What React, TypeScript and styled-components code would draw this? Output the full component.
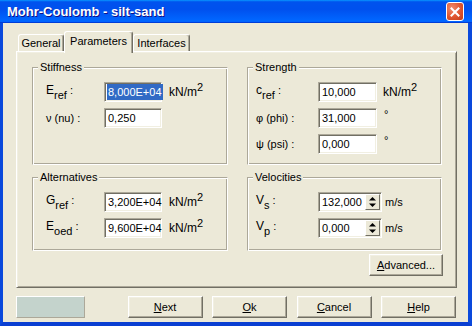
import React from 'react';
import styled, { createGlobalStyle } from 'styled-components';

const face = '#ECE9D8';
const light = '#F1EFE2';
const shadow = '#ACA899';
const darkShadow = '#716F64';

const GlobalStyle = createGlobalStyle`
  html, body {
    margin: 0;
    padding: 0;
    background: ${face};
  }
  body {
    font-family: 'Liberation Sans', Arial, sans-serif;
    font-size: 11px;
    color: #000;
  }
`;

type Side = 'left' | 'right';

const sides = {
  left: { pad: 13, label: 58, field: 58, unitGap: 7 },
  right: { pad: 8, label: 62, field: 59, unitGap: 6 },
};

const Window = styled.div`
  width: 472px;
  height: 326px;
  display: flex;
  flex-direction: column;
  background: #0a49dc;
  overflow: hidden;
`;

const TitleBar = styled.div`
  height: 23px;
  flex: none;
  display: flex;
  align-items: center;
  justify-content: space-between;
  padding: 0 8px 0 7px;
  background: linear-gradient(
    180deg,
    #0997ff,
    #0053ee 8%,
    #0050ee 40%,
    #0066ff 88%,
    #0066ff 93%,
    #005bff 95%,
    #003dd7 96%,
    #003dd7
  );
`;

const Title = styled.span`
  font-family: 'Liberation Sans', Arial, sans-serif;
  font-weight: bold;
  font-size: 13px;
  color: #fff;
  text-shadow: 1px 1px #0f1089;
  letter-spacing: 0;
`;

const CloseButton = styled.div`
  width: 18px;
  height: 19px;
  box-sizing: border-box;
  border: 1px solid #fff;
  border-radius: 3px;
  background: radial-gradient(circle at 30% 30%, #f08a6c, #e0552f 55%, #c23b17);
  display: flex;
  align-items: center;
  justify-content: center;
`;

const Frame = styled.div`
  flex: 1;
  display: flex;
  border-left: 3px solid #0a49dc;
  border-right: 4px solid #0a49dc;
  border-bottom: 4px solid #0a3fd2;
`;

const Client = styled.div`
  flex: 1;
  display: flex;
  flex-direction: column;
  background: ${face};
  padding: 8px 11px 4px 13px;
`;

const TabStrip = styled.div`
  height: 20px;
  display: flex;
  align-items: flex-end;
  padding-left: 2px;
  position: relative;
  z-index: 1;
`;

const Tab = styled.div<{ $active?: boolean; $w: number }>`
  box-sizing: border-box;
  width: ${(p) => p.$w}px;
  height: ${(p) => (p.$active ? 22 : 17)}px;
  margin-bottom: ${(p) => (p.$active ? -2 : 0)}px;
  padding-bottom: ${(p) => (p.$active ? 3 : 0)}px;
  display: flex;
  align-items: center;
  justify-content: center;
  background: ${face};
  border: 1px solid #fff;
  border-bottom: none;
  border-right-color: ${darkShadow};
  border-radius: 3px 3px 0 0;
  box-shadow: inset -1px 0 ${shadow};
  font-size: 11px;
  position: relative;
  z-index: ${(p) => (p.$active ? 2 : 1)};
`;

const TabPanel = styled.div`
  box-sizing: border-box;
  height: 237px;
  flex: none;
  border: 1px solid;
  border-color: #fff ${darkShadow} ${darkShadow} #fff;
  box-shadow: inset 1px 1px ${light}, inset -1px -1px ${shadow};
  padding: 9px 14px 0 15px;
  display: flex;
  flex-direction: column;
`;

const GroupGrid = styled.div`
  display: grid;
  grid-template-columns: 196px 195px;
  grid-template-rows: 104px 80px;
  column-gap: 19px;
  row-gap: 6px;
`;

const Group = styled.fieldset`
  margin: 0;
  padding: 0;
  min-width: 0;
  box-sizing: border-box;
  border: 1px solid;
  border-color: ${shadow} #fff #fff ${shadow};
  box-shadow: inset 1px 1px #fff, inset -1px -1px ${shadow};
`;

const Legend = styled.legend`
  margin-left: 5px;
  padding: 0 2px;
  font-size: 11px;
  line-height: 13px;
  background: ${face};
`;

const Rows = styled.div<{ $side: Side }>`
  display: flex;
  flex-direction: column;
  gap: 6px;
  margin-top: 8px;
  padding-left: ${(p) => sides[p.$side].pad}px;
`;

const Row = styled.div<{ $side: Side }>`
  display: grid;
  grid-template-columns: ${(p) => sides[p.$side].label}px auto auto;
  justify-content: start;
  align-items: center;
  height: 20px;
`;

const Label = styled.div<{ $sub?: boolean }>`
  font-size: 11px;
  line-height: 14px;
  white-space: nowrap;
  padding-bottom: ${(p) => (p.$sub ? 5 : 0)}px;
`;

const Sym = styled.span`
  font-size: 12px;
`;

const Sub = styled.sub`
  font-size: 11px;
  line-height: 0;
  vertical-align: -5px;
`;

const Sup = styled.sup`
  font-size: 11px;
  line-height: 0;
  vertical-align: 5px;
`;

const Field = styled.div<{ $w: number }>`
  box-sizing: border-box;
  width: ${(p) => p.$w}px;
  height: 20px;
  display: flex;
  align-items: stretch;
  background: #fff;
  border: 1px solid;
  border-color: ${shadow} #fff #fff ${shadow};
  box-shadow: inset 1px 1px ${darkShadow}, inset -1px -1px ${light};
  padding: 1px 1px 1px 2px;
  font-size: 11px;
`;

const FieldText = styled.span<{ $selected?: boolean }>`
  display: flex;
  align-items: center;
  padding: 0 1px;
  background: ${(p) => (p.$selected ? '#316AC5' : 'transparent')};
  color: ${(p) => (p.$selected ? '#fff' : '#000')};
`;

const Spin = styled.div`
  margin-left: auto;
  width: 15px;
  box-sizing: border-box;
  background: ${face};
  border: 1px solid;
  border-color: #fff ${darkShadow} ${darkShadow} #fff;
  display: flex;
  align-items: center;
  justify-content: center;
`;

const Unit = styled.div<{ $gap: number }>`
  margin-left: ${(p) => p.$gap}px;
  font-size: 12px;
  white-space: nowrap;
`;

const Degree = styled.div<{ $gap: number }>`
  margin-left: ${(p) => p.$gap + 1}px;
  align-self: start;
  font-size: 11px;
  line-height: 12px;
`;

const AdvancedRow = styled.div`
  display: flex;
  justify-content: flex-end;
  margin: 3px -1px 0 0;
`;

const Button = styled.div<{ $w: number }>`
  box-sizing: border-box;
  width: ${(p) => p.$w}px;
  height: 22px;
  display: flex;
  align-items: center;
  justify-content: center;
  background: ${face};
  border: 1px solid;
  border-color: #fff ${darkShadow} ${darkShadow} #fff;
  box-shadow: inset -1px -1px ${shadow}, inset 1px 1px ${light};
  font-size: 11px;
  u {
    text-decoration-thickness: 1px;
    text-underline-offset: 1px;
  }
`;

const Footer = styled.div`
  display: flex;
  align-items: center;
  margin-top: 8px;
  padding-right: 1px;
`;

const StatusBox = styled.div`
  width: 69px;
  height: 22px;
  box-sizing: border-box;
  background: #c4d3cc;
  border: 1px solid;
  border-color: #fff ${shadow} ${shadow} #fff;
`;

const ButtonGroup = styled.div`
  margin-left: auto;
  display: flex;
  gap: 9.5px;
`;

const SpinArrows = () => (
  <svg width="9" height="14" viewBox="0 0 9 14">
    <path d="M4.5 2 L8 5.5 L1 5.5 Z" fill="#000" />
    <path d="M1 8.5 L8 8.5 L4.5 12 Z" fill="#000" />
  </svg>
);

const CloseIcon = () => (
  <svg width="10" height="10" viewBox="0 0 10 10">
    <path d="M1.5 1.5 L8.5 8.5 M8.5 1.5 L1.5 8.5" stroke="#fff" strokeWidth="2" strokeLinecap="square" />
  </svg>
);

interface ParamRowProps {
  side: Side;
  label: React.ReactNode;
  sub?: boolean;
  value: string;
  selected?: boolean;
  unit?: 'stress' | 'deg' | 'speed';
  spin?: boolean;
}

const Stress = () => (
  <>
    kN/m<Sup>2</Sup>
  </>
);

const ParamRow = ({ side, label, sub, value, selected, unit, spin }: ParamRowProps) => {
  const cfg = sides[side];
  const width = spin ? 64 : cfg.field;
  const gap = spin ? 3 : cfg.unitGap;
  return (
    <Row $side={side}>
      <Label $sub={sub}>{label}</Label>
      <Field $w={width}>
        <FieldText $selected={selected}>{value}</FieldText>
        {spin && (
          <Spin>
            <SpinArrows />
          </Spin>
        )}
      </Field>
      {unit === 'stress' && (
        <Unit $gap={gap}>
          <Stress />
        </Unit>
      )}
      {unit === 'deg' && <Degree $gap={gap}>°</Degree>}
      {unit === 'speed' && (
        <Unit $gap={gap} style={{ fontSize: 11 }}>
          m/s
        </Unit>
      )}
    </Row>
  );
};

const App = () => (
  <>
    <GlobalStyle />
    <Window>
      <TitleBar>
        <Title>Mohr-Coulomb - silt-sand</Title>
        <CloseButton>
          <CloseIcon />
        </CloseButton>
      </TitleBar>
      <Frame>
        <Client>
          <TabStrip>
            <Tab $w={46}>General</Tab>
            <Tab $w={69} $active>
              Parameters
            </Tab>
            <Tab $w={57}>Interfaces</Tab>
          </TabStrip>
          <TabPanel>
            <GroupGrid>
              <Group>
                <Legend>Stiffness</Legend>
                <Rows $side="left">
                  <ParamRow
                    side="left"
                    sub
                    label={
                      <>
                        <Sym>E</Sym>
                        <Sub>ref</Sub> :
                      </>
                    }
                    value="8,000E+04"
                    selected
                    unit="stress"
                  />
                  <ParamRow side="left" label="ν (nu) :" value="0,250" />
                </Rows>
              </Group>
              <Group>
                <Legend>Strength</Legend>
                <Rows $side="right">
                  <ParamRow
                    side="right"
                    sub
                    label={
                      <>
                        <Sym>c</Sym>
                        <Sub>ref</Sub> :
                      </>
                    }
                    value="10,000"
                    unit="stress"
                  />
                  <ParamRow side="right" label="φ (phi) :" value="31,000" unit="deg" />
                  <ParamRow side="right" label="ψ (psi) :" value="0,000" unit="deg" />
                </Rows>
              </Group>
              <Group>
                <Legend>Alternatives</Legend>
                <Rows $side="left">
                  <ParamRow
                    side="left"
                    sub
                    label={
                      <>
                        <Sym>G</Sym>
                        <Sub>ref</Sub> :
                      </>
                    }
                    value="3,200E+04"
                    unit="stress"
                  />
                  <ParamRow
                    side="left"
                    sub
                    label={
                      <>
                        <Sym>E</Sym>
                        <Sub>oed</Sub> :
                      </>
                    }
                    value="9,600E+04"
                    unit="stress"
                  />
                </Rows>
              </Group>
              <Group>
                <Legend>Velocities</Legend>
                <Rows $side="right">
                  <ParamRow
                    side="right"
                    sub
                    label={
                      <>
                        <Sym>V</Sym>
                        <Sub>s</Sub> :
                      </>
                    }
                    value="132,000"
                    unit="speed"
                    spin
                  />
                  <ParamRow
                    side="right"
                    sub
                    label={
                      <>
                        <Sym>V</Sym>
                        <Sub>p</Sub> :
                      </>
                    }
                    value="0,000"
                    unit="speed"
                    spin
                  />
                </Rows>
              </Group>
            </GroupGrid>
            <AdvancedRow>
              <Button $w={74}>
                <span>
                  <u>A</u>dvanced...
                </span>
              </Button>
            </AdvancedRow>
          </TabPanel>
          <Footer>
            <StatusBox />
            <ButtonGroup>
              <Button $w={75}>
                <span>
                  <u>N</u>ext
                </span>
              </Button>
              <Button $w={75}>
                <span>
                  <u>O</u>k
                </span>
              </Button>
              <Button $w={75}>
                <span>
                  <u>C</u>ancel
                </span>
              </Button>
              <Button $w={75}>
                <span>
                  <u>H</u>elp
                </span>
              </Button>
            </ButtonGroup>
          </Footer>
        </Client>
      </Frame>
    </Window>
  </>
);

export default App;
